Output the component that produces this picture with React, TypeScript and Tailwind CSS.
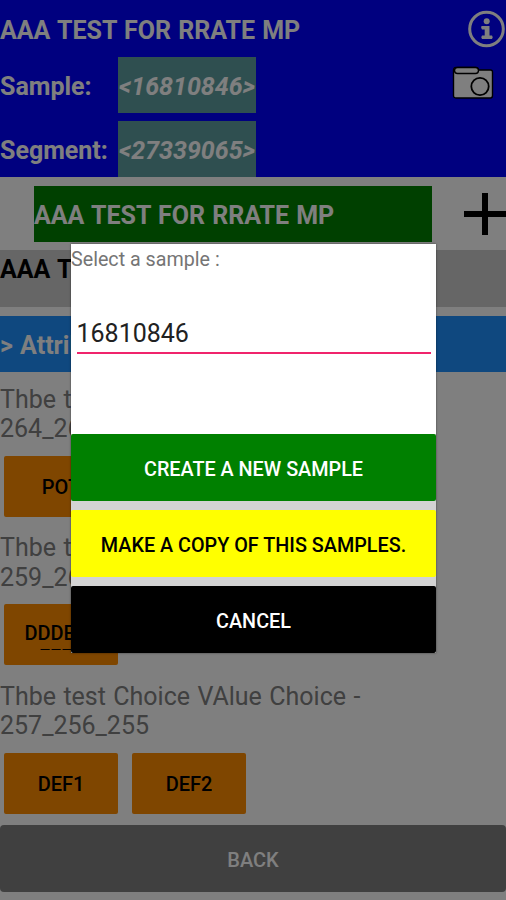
import { clsx } from "clsx"
import type { ReactNode } from "react"

interface Choice {
  lines: string[]
}

interface Attribute {
  title: string
  code: string
  choices: Choice[]
}

const attributes: Attribute[] = [
  { title: "Thbe test Choice -", code: "264_263_262", choices: [{ lines: ["POT"] }] },
  { title: "Thbe test Choice -", code: "259_260_261", choices: [{ lines: ["DDDEEE", "FFFF"] }] },
  {
    title: "Thbe test Choice VAlue Choice -",
    code: "257_256_255",
    choices: [{ lines: ["DEF1"] }, { lines: ["DEF2"] }],
  },
]

function InfoIcon() {
  return (
    <svg width="38" height="38" viewBox="0 0 38 38" fill="none">
      <circle cx="18.5" cy="19" r="16.800" stroke="#fff" strokeWidth="3" />
      <circle cx="18.7" cy="11.3" r="3" fill="#fff" />
      <path d="M13.500 16h8v9.500H24q1.500 1.700 0 3.500H14q-1.500-1.800 0-3.500h2.700v-6h-2.700q-1.500-1.700-.5-3.500z" fill="#fff" />
    </svg>
  )
}

function CameraIcon() {
  return (
    <svg width="42" height="34" viewBox="0 0 42 34" fill="#fff" stroke="#000" strokeWidth="1.4">
      <path d="M4 1.500h20q2 0 2.500 2.500H38.500q2 0 2 2V29.500q0 2.500-2 2.500H4q-2.500 0-2.500-2.500V4q0-2.500 2.500-2.500z" />
      <rect x="2.500" y="1.500" width="24" height="6" rx="3" />
      <circle cx="28" cy="20.500" r="8.700" strokeWidth="1.800" />
    </svg>
  )
}

function PlusIcon() {
  return (
    <svg width="42" height="42" viewBox="0 0 42 42" stroke="#000" strokeWidth="6">
      <path d="M0 21h42M21 0v42" />
    </svg>
  )
}

function HeaderField({ label, value }: { label: string; value: string }) {
  return (
    <div className="flex h-14 items-center">
      <span className="w-[118px] shrink-0 pt-[4px]">{label}</span>
      <span className="flex h-full w-[138px] items-center justify-center bg-[#5f9ea0] pt-[4px] italic">
        {value}
      </span>
    </div>
  )
}

function ChoiceButton({ lines }: Choice) {
  return (
    <button
      className={clsx(
        "flex h-[61px] w-[114px] flex-col items-center rounded-xs bg-[#ff8c00] text-[20px] leading-[23px] font-medium",
        lines.length > 1 ? "pt-[17px]" : "justify-center pt-0.5"
      )}
    >
      {/* the label area is only a little taller than one line */}
      <span className={clsx("flex flex-col items-center overflow-hidden", lines.length > 1 && "h-[29px]")}>
        {lines.map((line) => (
          <span key={line} className="shrink-0 leading-[24px]">
            {line}
          </span>
        ))}
      </span>
    </button>
  )
}

function AttributeBlock({ title, code, choices }: Attribute) {
  return (
    <section className="h-[148.500px] pt-[13px]">
      <p className="text-[25px] leading-[29.500px] [word-spacing:1.200px] text-[#808080]">
        {title}
        <br />
        {code}
      </p>
      <div className="mt-3 flex gap-3.5 pl-1">
        {choices.map((choice) => (
          <ChoiceButton key={choice.lines[0]} {...choice} />
        ))}
      </div>
    </section>
  )
}

function DialogButton({ className, children }: { className: string; children: ReactNode }) {
  return (
    <button className={clsx("h-[67px] w-full rounded-xs pt-[5px] text-[19.800px] font-medium", className)}>
      {children}
    </button>
  )
}

function SampleDialog() {
  return (
    <div className="absolute top-[244px] left-[71px] flex h-[409px] w-[365px] flex-col bg-[#d3d3d3] shadow-[0_0_2px_rgba(0,0,0,0.5)]">
      <div className="h-[190px] bg-white">
        <p className="h-[73px] pt-[4px] text-[19.700px] leading-6 text-[#757575]">Select a sample :</p>
        <div className="mx-[5.500px] flex h-[37px] items-center border-b-2 border-[#f0246c] pb-px text-[25px] text-[#212121]">
          16810846
        </div>
      </div>
      <div className="flex flex-col gap-[9px]">
        <DialogButton className="bg-[#008000] text-white">CREATE A NEW SAMPLE</DialogButton>
        <DialogButton className="bg-[#ffff00] text-black">MAKE A COPY OF THIS SAMPLES.</DialogButton>
        <DialogButton className="bg-black text-white">CANCEL</DialogButton>
      </div>
    </div>
  )
}

export default function App() {
  return (
    <div className="relative h-[900px] w-[506px] overflow-hidden bg-white font-[Roboto,sans-serif]">
      <header className="flex h-[177px] justify-between bg-[#0000ff] text-[25px] font-bold whitespace-nowrap text-white">
        <div>
          <h1 className="flex h-[57px] items-center pt-1 [word-spacing:1px]">AAA TEST FOR RRATE MP</h1>
          <div className="flex flex-col gap-2">
            <HeaderField label="Sample:" value="<16810846>" />
            <HeaderField label="Segment:" value="<27339065>" />
          </div>
        </div>
        <div className="flex flex-col items-end gap-[18px] pt-[9.500px]">
          <InfoIcon />
          <div className="pr-3">
            <CameraIcon />
          </div>
        </div>
      </header>

      <div className="flex h-[73px] items-center justify-between pl-[34px]">
        <div className="flex h-14 w-[398px] items-center bg-[#008000] pt-1 text-[25px] font-bold [word-spacing:1px] text-white">
          AAA TEST FOR RRATE MP
        </div>
        <PlusIcon />
      </div>
      <div className="h-[56.500px] bg-[#cccccc] pt-[5px] text-[25px] leading-[30px] font-bold [word-spacing:1px]">
        AAA TEST FOR RRATE MP
      </div>
      <div className="mt-[9px] flex h-14 items-center bg-[#1e90ff] pt-1 text-[25px] font-bold [word-spacing:1px] text-white">
        &gt; Attributes
      </div>

      <main>
        {attributes.map((attribute) => (
          <AttributeBlock key={attribute.code} {...attribute} />
        ))}
      </main>

      <button className="mt-2 h-[67px] w-full rounded-sm bg-[#808080] pt-0.5 text-[20px] font-medium text-white">
        BACK
      </button>

      <div className="absolute inset-0 bg-black/50" />
      <SampleDialog />
    </div>
  )
}
